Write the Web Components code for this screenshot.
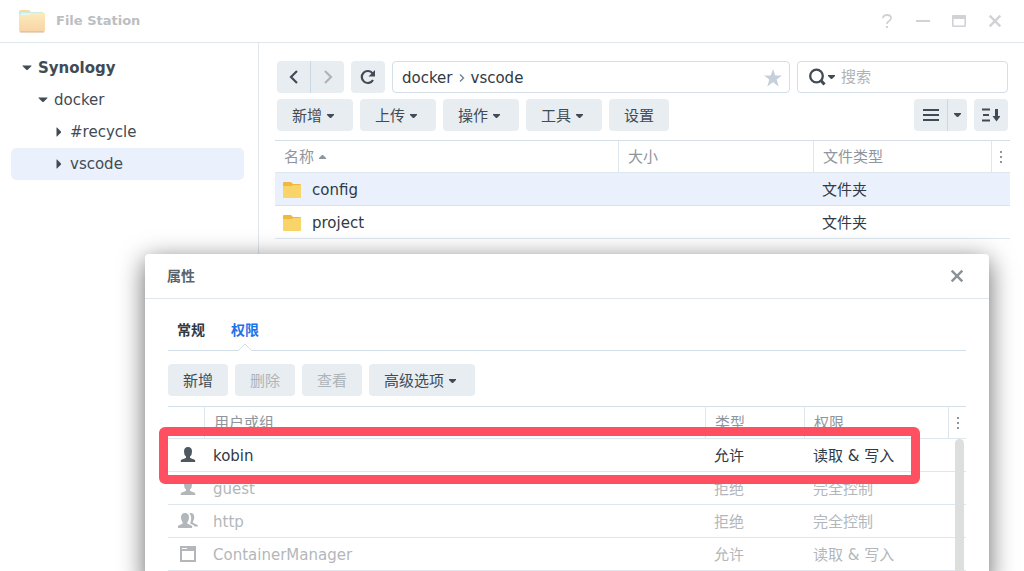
<!DOCTYPE html>
<html lang="zh-CN">
<head>
<meta charset="utf-8">
<meta name="viewport" content="width=device-width, initial-scale=1">
<title>File Station</title>
<style>
  html, body { margin: 0; height: 100%; }
  body {
    --text: #414b55;
    --strong: #2f3a44;
    --muted: #8f959c;
    --faded: #b3b7bb;
    --line: #dfe7ee;
    --line-strong: #d3dee8;
    --fill: #e8edf1;
    --selected: #eaf1fc;
    --accent: #1e73e8;
    font: 15px/20px "DejaVu Sans", "Noto Sans CJK SC", sans-serif;
    color: var(--text);
    background: #fff;
    overflow: hidden;
  }
</style>
</head>
<body>
<file-station></file-station>

<script>
const define = (name, html, setup) => {
  const template = document.createElement('template');
  template.innerHTML = '<style>*{box-sizing:border-box}:host{display:block}button{font:inherit;color:inherit;border:0;padding:0;margin:0;background:none}a{color:inherit;text-decoration:none}</style>' + html;
  customElements.define(name, class extends HTMLElement {
    constructor() {
      super();
      this.attachShadow({ mode: 'open' }).append(template.content.cloneNode(true));
    }
    connectedCallback() { if (setup) setup(this, this.shadowRoot); }
  });
};

const line = (d, w = 2) => `<path d="${d}" fill="none" stroke="currentColor" stroke-width="${w}"/>`;
const icons = {
  app: [28, 24, `<defs><linearGradient id="g" x2="0" y2="1"><stop stop-color="#fcebbd"/><stop offset="1" stop-color="#f8d3a4"/></linearGradient></defs>
    <path d="M1 3q0-2 2-2h8l2 2h11q2 0 2 2v8H1z" fill="#f8dba0"/><path d="M2 3h22v6H2z" fill="#c9ece6"/><path d="M3 4h21v2H3z" fill="#e8f5ec"/>
    <path d="M1 7q0-1 1-1h9l2-2h13q1 0 1 1v16q0 2-2 2H3q-2 0-2-2z" fill="url(#g)"/><path d="M2 23h24" stroke="#d2b38f"/>`],
  help: [16, 16, line('M4 5.2Q4 2 8 2t4 3q0 1.700-2 2.900T8 11', 1.8) + '<rect x="7" y="13" width="2" height="2" fill="currentColor"/>'],
  minimize: [16, 16, '<rect x="1" y="7" width="14" height="2" fill="currentColor"/>'],
  maximize: [16, 16, '<path fill="currentColor" fill-rule="evenodd" d="M2 2h12q1 0 1 1v10q0 1-1 1H2q-1 0-1-1V3q0-1 1-1zm.6 4v6.400h10.800V6z"/>'],
  close: [14, 14, '<path d="M1.700 1.700l10.600 10.600M12.300 1.700L1.700 12.300" fill="none" stroke="currentColor" stroke-width="2.400"/>'],
  down: [7, 4, '<path d="M0 0h7v1L4 4H3L0 1z" fill="currentColor"/>'],
  up: [7, 4, '<path d="M0 4h7V3L4 0H3L0 3z" fill="currentColor"/>'],
  expanded: [10, 6, '<path d="M.500 .500h9v.5L5.500 5h-1L.500 1z" fill="currentColor"/>'],
  collapsed: [6, 10, '<path d="M.500 .500H1L5 4.500v1L1 9.500H.500z" fill="currentColor"/>'],
  back: [14, 16, line('M10 2L4 8l6 6', 2.2)],
  forward: [14, 16, line('M4 2l6 6-6 6', 2.2)],
  crumb: [6, 10, line('M1 1.500l3.500 3.500L1 8.500', 1.4)],
  refresh: [16, 16, line('M13 11a6 6 0 1 1-.4-6.600', 2.2) + '<path d="M15 1v6.500H8.500z" fill="currentColor"/>'],
  star: [18, 18, '<path fill="currentColor" d="M9 0l2.300 6.500H18l-5.300 4.100 2 6.900L9 13.300l-5.700 4.200 2-6.900L0 6.500h6.700z"/>'],
  search: [17, 18, '<circle cx="7.500" cy="8" r="6.300" fill="none" stroke="currentColor" stroke-width="2.300"/>' + line('M11.500 12l4 4.500', 3)],
  list: [16, 14, line('M0 2h16M0 7h16M0 12h16', 2)],
  sort: [18, 14, line('M0 1.500h8M1 7h6M0 12.500h8', 2) + '<path d="M13 1h3v7h2.500l-4 5.500-4-5.500H13z" fill="currentColor"/>'],
  folder: [18, 16, '<path d="M0 1q0-1 1-1h7l2 2h7q1 0 1 1v5H0z" fill="#f0b840"/><path d="M0 4h9l1-1h8v12q0 1-1 1H1q-1 0-1-1z" fill="#f8d469"/>'],
  more: [4, 14, '<path fill="currentColor" d="M1 1h2v2H1zM1 6h2v2H1zM1 11h2v2H1z"/>'],
  user: [16, 16, '<path fill="currentColor" d="M8 0q4 0 4 4.500 0 3.500-2 5v1.200q1 .8 3.600 1.500Q16 13 15 15H1q-1-2 1.400-2.800Q5 11.500 6 10.700V9.500Q4 8 4 4.500 4 0 8 0z"/>'],
  group: [20, 16, '<path fill="currentColor" d="M7 0q4 0 4 4.500 0 3.200-1.700 5v1q1 .8 3.200 1.400Q15 12.600 14 15H0q-.600-2.400 1.500-3.100 2.200-.6 3.200-1.400v-1Q3 7.700 3 4.500 3 0 7 0zM11.500 0q5-.3 4.700 4.500-.2 3-1.500 4.500.3 1.200 3.300 2.200 2.300.8 2 2.300h-3.500q-.5-1.700-4-2.800l-.2-1.200Q14.500 5 11.500 0z"/>'],
  package: [16, 16, '<path fill="currentColor" fill-rule="evenodd" d="M0 0h16v16H0zm2 5v9h12V5zm0-3v1h5V2z"/>'],
};

class UiIcon extends HTMLElement {
  static observedAttributes = ['name'];
  constructor() { super(); this.attachShadow({ mode: 'open' }); }
  attributeChangedCallback() {
    const [w, h, body] = icons[this.getAttribute('name')];
    this.shadowRoot.innerHTML = `<style>:host{display:inline-block;flex:none;line-height:0}svg{display:block}</style>
      <svg width="${w}" height="${h}" viewBox="0 0 ${w} ${h}" aria-hidden="true">${body}</svg>`;
  }
}
customElements.define('ui-icon', UiIcon);

define('title-bar', `
  <style>
    :host { border-bottom: 1px solid var(--line); }
    header { display: flex; align-items: center; height: 42px; padding: 0 11px 0 18px; }
    h1 { flex: 1; margin: 0 0 0 10px; font-size: 13px; line-height: 20px; font-weight: 700; color: #bcbec1; }
    button { width: 36px; height: 32px; display: grid; place-items: center; color: #d0d2d5; }
  </style>
  <header>
    <ui-icon name="app"></ui-icon>
    <h1><slot></slot></h1>
    <button aria-label="帮助"><ui-icon name="help"></ui-icon></button>
    <button aria-label="最小化"><ui-icon name="minimize"></ui-icon></button>
    <button aria-label="最大化"><ui-icon name="maximize"></ui-icon></button>
    <button aria-label="关闭"><ui-icon name="close"></ui-icon></button>
  </header>`);

define('tree-item', `
  <style>
    a { display: flex; align-items: center; height: 32px; gap: 6px; border-radius: 5px; color: var(--text); }
    span { display: grid; place-items: center; width: 10px; }
    :host([level="1"]) a { padding-left: 11px; font-weight: 700; }
    :host([level="2"]) a { padding-left: 27px; }
    :host([level="3"]) a { padding-left: 43px; }
    :host([selected]) a { background: var(--selected); }
  </style>
  <a href="#"><span><ui-icon></ui-icon></span><slot></slot></a>`,
  (host, root) => root.querySelector('ui-icon').setAttribute('name', host.hasAttribute('open') ? 'expanded' : 'collapsed'));

define('folder-tree', `
  <style>
    :host { border-right: 1px solid var(--line); }
    nav { padding: 9px 14px 8px 11px; }
  </style>
  <nav aria-label="文件夹"><slot></slot></nav>`);

define('tool-button', `
  <style>
    button { display: flex; align-items: center; justify-content: center; gap: 5px; height: 32px; padding: 2px 15px 0;
             border-radius: 4px; background: var(--fill); white-space: nowrap; color: var(--text); }
    button:disabled { color: #adb4ba; }
    ui-icon { display: none; margin-right: 4px; }
    :host([menu]) ui-icon { display: block; }
    :host([square]) button { width: 34px; padding: 0; }
  </style>
  <button><slot></slot><ui-icon name="down"></ui-icon></button>`,
  (host, root) => {
    const button = root.querySelector('button');
    button.disabled = host.hasAttribute('disabled');
    if (host.hasAttribute('menu')) button.setAttribute('aria-haspopup', 'menu');
    if (host.hasAttribute('label')) button.setAttribute('aria-label', host.getAttribute('label'));
  });

define('split-buttons', `
  <style>
    :host { display: flex; height: 32px; border-radius: 4px; overflow: hidden; background: var(--fill); }
  </style><slot></slot>`);

define('path-bar', `
  <style>
    :host { flex: 1; min-width: 0; }
    nav { display: flex; align-items: center; gap: 6px; height: 32px; padding: 2px 7px 0 9px; border: 1px solid var(--line-strong); border-radius: 4px; color: var(--strong); }
    nav > ui-icon { color: #6f8496; }
    button { margin-left: auto; color: #c5d0da; }
    button ui-icon { display: block; }
  </style>
  <nav aria-label="路径"><a href="#">docker</a><ui-icon name="crumb"></ui-icon><a href="#">vscode</a>
    <button aria-label="收藏"><ui-icon name="star"></ui-icon></button></nav>`);

define('search-box', `
  <style>
    :host { flex: 0 0 211px; min-width: 0; }
    div { display: flex; align-items: center; gap: 6px; height: 32px; padding: 0 8px 0 11px; border: 1px solid var(--line-strong); border-radius: 4px; }
    button { display: flex; align-items: center; gap: 2px; color: var(--text); }
    input { flex: 1; min-width: 0; border: 0; padding: 0; background: none; font: inherit; color: var(--text); outline: 0; }
    input::placeholder { color: #aeb3b8; opacity: 1; }
  </style>
  <div><button aria-label="搜索选项"><ui-icon name="search"></ui-icon><ui-icon name="down"></ui-icon></button>
  <input type="text" aria-label="搜索" placeholder="搜索"></div>`);

const tableStyle = `
    table { width: 100%; table-layout: fixed; border-collapse: separate; border-spacing: 0; }
    th, td { height: 33px; padding: 0 0 0 9px; text-align: left; font-weight: 400; white-space: nowrap; border-bottom: 1px solid var(--line); }
    th { border-top: 1px solid var(--line-strong); color: var(--muted); }
    th + th { border-left: 1px solid var(--line); }
    td { padding: 2px 0 0 9px; }
    th:last-child { padding: 0; }
    th:last-child ui-icon { display: block; width: 4px; margin: 0 auto; }`;

define('file-table', `
  <style>${tableStyle}
    td { color: var(--strong); }
    td:first-child { padding-left: 8px; }
    .name { display: flex; align-items: center; gap: 11px; }
    th ui-icon { vertical-align: middle; margin-left: 5px; }
    .selected td { background: var(--selected); border-color: #d6e2f0; }
    .size { width: 195px } .type { width: 178px } .menu { width: 19px }
  </style>
  <table>
    <colgroup><col><col class="size"><col class="type"><col class="menu"></colgroup>
    <thead><tr><th>名称<ui-icon name="up"></ui-icon></th><th>大小</th><th>文件类型</th><th aria-label="列"><ui-icon name="more"></ui-icon></th></tr></thead>
    <tbody>
      <tr class="selected"><td><span class="name"><ui-icon name="folder"></ui-icon>config</span></td><td></td><td>文件夹</td><td></td></tr>
      <tr><td><span class="name"><ui-icon name="folder"></ui-icon>project</span></td><td></td><td>文件夹</td><td></td></tr>
    </tbody>
  </table>`);

define('permission-table', `
  <style>${tableStyle}
    :host { position: relative; }
    td { color: var(--faded); }
    td:first-child { padding: 0 0 0 4px; }
    td:first-child ui-icon { display: grid; justify-items: center; }
    .active td { color: var(--strong); }
    .active td:first-child { color: #4d5861; }
    .icon { width: 36px } .kind { width: 99px } .access { width: 144px } .menu { width: 18px }
    .thumb { position: absolute; top: 33px; right: 2px; bottom: 0; width: 9px; border-radius: 5px 5px 0 0; background: #dddede; }
    .ring { position: absolute; top: 21px; left: -9px; right: 46px; height: 57px; border: 9px solid #ff5062; border-radius: 6px; }
  </style>
  <table>
    <colgroup><col class="icon"><col><col class="kind"><col class="access"><col class="menu"></colgroup>
    <thead><tr><th></th><th>用户或组</th><th>类型</th><th>权限</th><th aria-label="列"><ui-icon name="more"></ui-icon></th></tr></thead>
    <tbody>
      <tr class="active"><td><ui-icon name="user"></ui-icon></td><td>kobin</td><td>允许</td><td>读取 &amp; 写入</td><td></td></tr>
      <tr><td><ui-icon name="user"></ui-icon></td><td>guest</td><td>拒绝</td><td>完全控制</td><td></td></tr>
      <tr><td><ui-icon name="group"></ui-icon></td><td>http</td><td>拒绝</td><td>完全控制</td><td></td></tr>
      <tr><td><ui-icon name="package"></ui-icon></td><td>ContainerManager</td><td>允许</td><td>读取 &amp; 写入</td><td></td></tr>
    </tbody>
  </table>
  <div class="thumb"></div>
  <div class="ring"></div>`);

define('properties-dialog', `
  <style>
    :host { background: #fff; border-radius: 4px; box-shadow: 0 6px 26px rgba(0,0,0,.6); }
    header { display: flex; align-items: center; justify-content: space-between; height: 45px; padding: 0 25px 0 22px; border-bottom: 1px solid var(--line); }
    h2 { margin: 0; font-size: 14px; line-height: 20px; font-weight: 700; color: #59636c; }
    header button { display: grid; color: #8b9198; }
    section { padding: 21px 23px 12px; }
    .tabs { display: flex; gap: 26px; height: 31px; padding-left: 9px; border-bottom: 1px solid var(--line-strong); font-size: 14px; }
    .tabs button { position: relative; height: 20px; font-weight: 700; color: var(--strong); }
    .tabs button[aria-selected="true"] { color: var(--accent); }
    .tabs svg { position: absolute; left: 50%; top: 23px; margin-left: -8px; }
    .actions { display: flex; gap: 7px; padding: 13px 0 10px; }
  </style>
  <header><h2>属性</h2><button aria-label="关闭"><ui-icon name="close"></ui-icon></button></header>
  <section>
    <div class="tabs" role="tablist">
      <button role="tab" aria-selected="false">常规</button>
      <button role="tab" aria-selected="true">权限<svg width="16" height="8" viewBox="0 0 16 8"><path d="M1 8L8 1l7 7" fill="#fff" stroke="#d3dee8"/></svg></button>
    </div>
    <div class="actions">
      <tool-button>新增</tool-button><tool-button disabled>删除</tool-button><tool-button disabled>查看</tool-button><tool-button menu>高级选项</tool-button>
    </div>
    <permission-table></permission-table>
  </section>`);

define('file-station', `
  <style>
    :host { position: relative; display: flex; flex-direction: column; height: 100vh; overflow: hidden; }
    .body { flex: 1; display: grid; grid-template-columns: 259px minmax(0, 1fr); }
    main { padding: 18px 14px 0 16px; }
    .bar { display: flex; gap: 7px; padding: 0 2px; margin-bottom: 6px; }
    .bar + .bar { margin-bottom: 9px; }
    .spacer { flex: 1; }
    split-buttons button { display: grid; place-items: center; width: 33px; }
    split-buttons button:first-child { width: 34px; border-right: 1px solid #ccd7e0; }
    split-buttons button.narrow { width: 19px; }
    split-buttons button:disabled { color: #adb4ba; }
    properties-dialog { position: absolute; left: 145px; right: 35px; top: 254px; min-height: calc(100vh - 240px); }
  </style>
  <title-bar>File Station</title-bar>
  <div class="body">
    <folder-tree>
      <tree-item level="1" open>Synology</tree-item>
      <tree-item level="2" open>docker</tree-item>
      <tree-item level="3">#recycle</tree-item>
      <tree-item level="3" selected>vscode</tree-item>
    </folder-tree>
    <main>
      <div class="bar">
        <split-buttons><button aria-label="后退"><ui-icon name="back"></ui-icon></button><button aria-label="前进" disabled><ui-icon name="forward"></ui-icon></button></split-buttons>
        <tool-button square label="刷新"><ui-icon name="refresh"></ui-icon></tool-button>
        <path-bar></path-bar>
        <search-box></search-box>
      </div>
      <div class="bar">
        <tool-button menu>新增</tool-button><tool-button menu>上传</tool-button><tool-button menu>操作</tool-button><tool-button menu>工具</tool-button><tool-button>设置</tool-button>
        <span class="spacer"></span>
        <split-buttons><button aria-label="列表视图"><ui-icon name="list"></ui-icon></button><button class="narrow" aria-label="视图选项"><ui-icon name="down"></ui-icon></button></split-buttons>
        <tool-button square label="排序"><ui-icon name="sort"></ui-icon></tool-button>
      </div>
      <file-table></file-table>
    </main>
  </div>
  <properties-dialog></properties-dialog>`);
</script>
</body>
</html>
